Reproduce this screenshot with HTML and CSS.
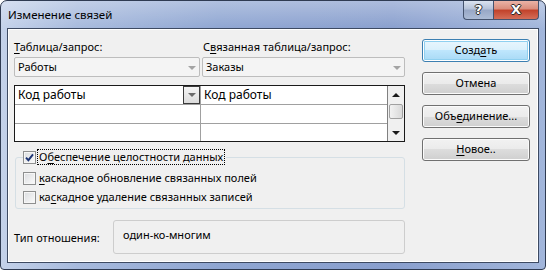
FILE: index.html
```html
<!DOCTYPE html>
<html lang="ru">
<head>
  <meta charset="utf-8">
  <title>Изменение связей</title>
  <link rel="stylesheet" href="styles.css">
</head>
<body>
  <div class="window">
    <div class="titlebar">
      <span class="title">Изменение связей</span>
      <div class="caption">
        <span class="cap-btn help">?</span>
        <span class="cap-btn close">X</span>
      </div>
    </div>

    <div class="client">
      <div class="form">
        <div class="pair">
          <span class="lbl"><u>Т</u>аблица/запрос:</span>
          <span class="lbl second">С<u>в</u>язанная таблица/запрос:</span>
          <div class="combo">Работы<span class="arrow"></span></div>
          <div class="combo">Заказы<span class="arrow"></span></div>
        </div>

        <div class="grid">
          <div class="col first">
            <div class="cell head">Код работы<span class="dd"><span class="dd-arrow"></span></span></div>
            <div class="cell"></div>
            <div class="cell last"></div>
          </div>
          <div class="col">
            <div class="cell head">Код работы</div>
            <div class="cell"></div>
            <div class="cell last"></div>
          </div>
          <div class="scroll">
            <div class="sb-btn"><span class="up"></span></div>
            <div class="track"><span class="thumb"></span></div>
            <div class="sb-btn"><span class="down"></span></div>
          </div>
        </div>

        <fieldset class="group">
          <legend class="check">
            <span class="box"><svg width="9" height="9" viewBox="0 0 9 9"><path d="M1 4.6 L3.4 7.2 L8 1.4" fill="none" stroke="#1d3474" stroke-width="1.9"/></svg></span>
            <span class="focus">О<u>б</u>еспечение целостности данных</span>
          </legend>
          <div class="check"><span class="box"></span><span><u>к</u>аскадное обновление связанных полей</span></div>
          <div class="check"><span class="box"></span><span>ка<u>с</u>кадное удаление связанных записей</span></div>
        </fieldset>

        <div class="kind">
          <span class="kind-label">Тип отношения:</span>
          <div class="kind-value">один-ко-многим</div>
        </div>
      </div>

      <div class="buttons">
        <div class="btn default">Созд<u>а</u>ть</div>
        <div class="btn">Отмена</div>
        <div class="btn">Объ<u>е</u>динение...</div>
        <div class="btn"><u>Н</u>овое..</div>
      </div>
    </div>
  </div>
</body>
</html>
```

FILE: styles.css
```css
* {
  box-sizing: border-box;
}
html, body {
  margin: 0;
  padding: 0;
}
body {
  font-family: "Noto Sans", "Liberation Sans", sans-serif;
  font-size: 11px;
  line-height: 16px;
  color: #000;
  background: #fff;
}
u {
  text-underline-offset: 2px;
}

.window {
  width: 546px;
  height: 270px;
  border: 1px solid #2f3b52;
  border-radius: 7px 7px 4px 4px;
  background:
    linear-gradient(to bottom, rgba(255,255,255,0.3), rgba(255,255,255,0) 28px),
    linear-gradient(to right, #c4d2ea 0%, #a7badd 14%, #8fa6d2 40%, #899fce 72%, #a2b6db 100%);
  padding: 0 6px 6px 6px;
  display: flex;
  flex-direction: column;
}

.titlebar {
  height: 27px;
  display: flex;
  justify-content: space-between;
}
.title {
  padding: 6px 0 0 1px;
  font-size: 11.5px;
}
.caption {
  display: flex;
  align-self: flex-start;
}
.cap-btn {
  height: 19px;
  border: 1px solid #45536e;
  border-top: none;
  display: flex;
  align-items: center;
  justify-content: center;
  color: #fff;
  font-family: "DejaVu Sans", sans-serif;
  font-weight: bold;
  font-size: 13px;
  text-shadow: 1px 0 #2a2a2a, -1px 0 #2a2a2a, 0 1px #2a2a2a, 0 -1px #2a2a2a;
}
.help {
  width: 30px;
  border-right: none;
  border-radius: 0 0 0 4px;
  background: linear-gradient(#dbe3f0, #b4c1d8 45%, #97a7c6 50%, #adbcd6);
}
.close {
  width: 46px;
  border-radius: 0 0 4px 0;
  background: linear-gradient(#eab3a6, #d98c7b 45%, #c14129 50%, #d46e58);
}

.client {
  flex: 1;
  background: #f0f0f0;
  border: 1px solid #3d4a62;
  box-shadow: inset 0 0 0 1px #ffffff;
  display: grid;
  grid-template-columns: 391px 108px;
  column-gap: 17px;
  align-items: start;
  padding: 10px 0 0 6px;
}

.form {
  display: flex;
  flex-direction: column;
}
.pair {
  display: grid;
  grid-template-columns: 186px 203px;
  column-gap: 2px;
  row-gap: 2px;
}
.lbl.second {
  padding-left: 1px;
}
.combo {
  height: 20px;
  border: 1px solid #bdbdbd;
  border-radius: 2px;
  background: #f4f4f4;
  padding: 1px 0 0 3px;
  display: flex;
  justify-content: space-between;
}
.arrow {
  margin: 7px 3px 0 0;
  width: 0;
  height: 0;
  border-left: 4px solid transparent;
  border-right: 4px solid transparent;
  border-top: 4px solid #a4a4a4;
}

.grid {
  margin-top: 8px;
  border: 1px solid #1a1a1a;
  background: #fff;
  display: grid;
  grid-template-columns: 186px 186px 17px;
}
.col.first {
  border-right: 1px solid #a0a0a0;
}
.cell {
  height: 19px;
  border-bottom: 1px solid #a0a0a0;
  padding: 1px 0 0 3px;
  display: flex;
  justify-content: space-between;
}
.cell.last {
  height: 17px;
  border-bottom: none;
}
.cell.head {
  font-size: 12px;
}
.dd {
  margin-top: -1px;
  width: 17px;
  height: 18px;
  border: 1px solid #3a3a3a;
  background: linear-gradient(#f4f4f4, #dcdcdc);
  display: flex;
  align-items: center;
  justify-content: center;
}
.dd-arrow {
  width: 0;
  height: 0;
  border-left: 4px solid transparent;
  border-right: 4px solid transparent;
  border-top: 4px solid #6a6a6a;
}

.scroll {
  border-left: 1px solid #808080;
  background: #f0f0f0;
  display: flex;
  flex-direction: column;
}
.sb-btn {
  height: 17px;
  display: flex;
  align-items: center;
  justify-content: center;
}
.up, .down {
  width: 0;
  height: 0;
  border-left: 4px solid transparent;
  border-right: 4px solid transparent;
}
.up {
  border-bottom: 4px solid #1a1a1a;
}
.down {
  border-top: 4px solid #1a1a1a;
}
.track {
  flex: 1;
  padding: 1px 1px 0 1px;
}
.thumb {
  display: block;
  height: 15px;
  border: 1px solid #a0a0a0;
  border-radius: 2px;
  background: linear-gradient(to right, #f2f2f2, #d9d9d9);
}

.group {
  margin: 7px 0 0 1px;
  min-width: 0;
  border: 1px solid #d5dfe5;
  border-radius: 3px;
  padding: 5px 0 3px 7px;
  display: flex;
  flex-direction: column;
  gap: 3px;
}
.group legend {
  padding: 0 1px 0 0;
  margin: 0;
}
.check {
  height: 16px;
  display: flex;
  align-items: center;
  gap: 3px;
}
.box {
  width: 13px;
  height: 13px;
  border: 1px solid #8e8f8f;
  background: linear-gradient(135deg, #dadcdf, #fbfbfb);
  box-shadow: inset 0 0 0 1px #f6f6f6;
  display: flex;
  align-items: center;
  justify-content: center;
}
.focus {
  margin-left: -2px;
  border: 1px dotted #000;
  padding: 0 1px;
  line-height: 14px;
}

.kind {
  margin-top: 11px;
  display: flex;
  align-items: center;
}
.kind-label {
  width: 99px;
  padding-top: 2px;
}
.kind-value {
  flex: 1;
  height: 34px;
  border: 1px solid #cdcdcd;
  border-radius: 3px;
  padding: 6px 9px;
}

.buttons {
  display: flex;
  flex-direction: column;
  gap: 10px;
}
.btn {
  height: 23px;
  border: 1px solid #707070;
  border-radius: 3px;
  background: linear-gradient(#f2f2f2 0%, #ebebeb 50%, #dddddd 50%, #cfcfcf 100%);
  box-shadow: inset 0 0 0 1px #fbfbfb;
  text-align: center;
  line-height: 20px;
}
.btn.default {
  border-color: #3c7fb1;
  background: linear-gradient(#eaf6fd 0%, #d9f0fc 50%, #bee6fd 50%, #a7d9f5 100%);
  box-shadow: inset 0 0 0 1px #ffffff, inset 0 0 0 2px #8fd0f0;
}
```
